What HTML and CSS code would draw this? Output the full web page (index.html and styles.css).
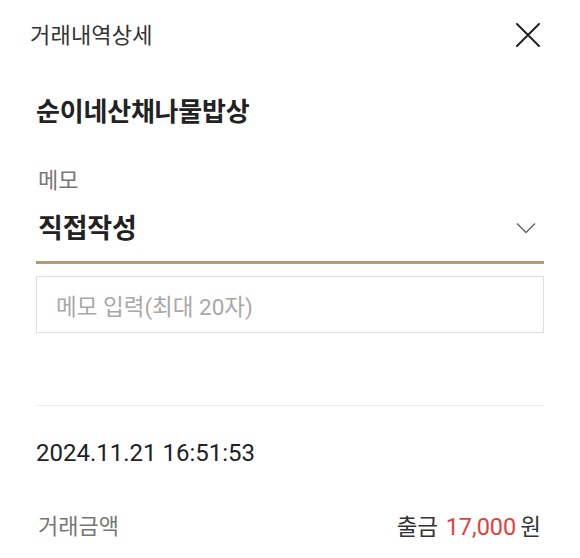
FILE: index.html
```html
<!DOCTYPE html>
<html lang="ko">
<head>
<meta charset="utf-8">
<link rel="stylesheet" href="styles.css">
</head>
<body>
<div class="page">
  <header class="header">
    <h1 class="title">거래내역상세</h1>
    <button class="close" aria-label="닫기">
      <svg width="24" height="24" viewBox="0 0 24 24"><path d="M1 1 L23 23 M23 1 L1 23" stroke="#222" stroke-width="2" fill="none" stroke-linecap="round"/></svg>
    </button>
  </header>
  <main class="body">
    <div class="shop">순이네산채나물밥상</div>
    <div class="label">메모</div>
    <div class="select">
      <span class="select-value">직접작성</span>
      <svg class="chev" width="20" height="12" viewBox="0 0 20 12"><path d="M1 1.5 L10 10.5 L19 1.5" stroke="#666" stroke-width="1.5" fill="none"/></svg>
    </div>
    <div class="input">메모 입력(최대 20자)</div>
    <div class="divider"></div>
    <div class="date">2024.11.21 16:51:53</div>
    <div class="row">
      <span class="row-label">거래금액</span>
      <span class="row-value">출금 <span class="red">17,000</span><span class="won">원</span></span>
    </div>
  </main>
</div>
</body>
</html>
```

FILE: styles.css
```css
* { box-sizing: border-box; }
html, body { margin: 0; padding: 0; background: #fff; }
body {
  font-family: Roboto, "Noto Sans CJK KR", sans-serif;
  color: #222;
  width: 580px;
  height: 558px;
  overflow: hidden;
}
.header {
  height: 72px;
  display: flex;
  align-items: center;
  justify-content: space-between;
  padding: 0 40px 0 30px;
}
.title {
  margin: 0;
  font-size: 22px;
  font-weight: 400;
  color: #333;
  line-height: 30px;
  letter-spacing: 0.2px;
}
.close {
  border: 0;
  background: none;
  padding: 0;
  width: 24px;
  height: 24px;
  margin-top: -2px;
  display: flex;
}
.body {
  padding: 0 36px;
}
.shop {
  margin-top: 22px;
  line-height: 36px;
  font-size: 26px;
  font-weight: 700;
  color: #222;
  letter-spacing: -0.2px;
}
.label {
  margin-top: 37px;
  line-height: 28px;
  font-size: 22px;
  color: #777;
  padding-left: 2px;
}
.select {
  height: 69px;
  padding: 4px 8px 3px 2px;
  display: flex;
  align-items: center;
  justify-content: space-between;
  border-bottom: 3px solid #b59b73;
}
.select-value {
  font-size: 27px;
  font-weight: 700;
  color: #222;
  line-height: 36px;
  letter-spacing: -0.2px;
}
.chev { margin-top: -2px; }
.input {
  margin-top: 12px;
  height: 57px;
  border: 1px solid #dedede;
  display: flex;
  align-items: center;
  padding-left: 19px;
  font-size: 22.5px;
  color: #a8a8a8;
}
.divider {
  margin-top: 72px;
  height: 1px;
  background: #ebebeb;
}
.date {
  margin-top: 32px;
  line-height: 30px;
  font-size: 24px;
  color: #222;
}
.row {
  margin-top: 44px;
  display: flex;
  justify-content: space-between;
  align-items: center;
  line-height: 30px;
  padding-left: 2px;
  padding-right: 3px;
}
.row-label {
  font-size: 22px;
  color: #777;
}
.row-value {
  font-size: 22.5px;
  color: #333;
}
.red { color: #e53e3e; font-size: 23.5px; margin-left: 2px; }
.won { margin-left: 4px; }
```
